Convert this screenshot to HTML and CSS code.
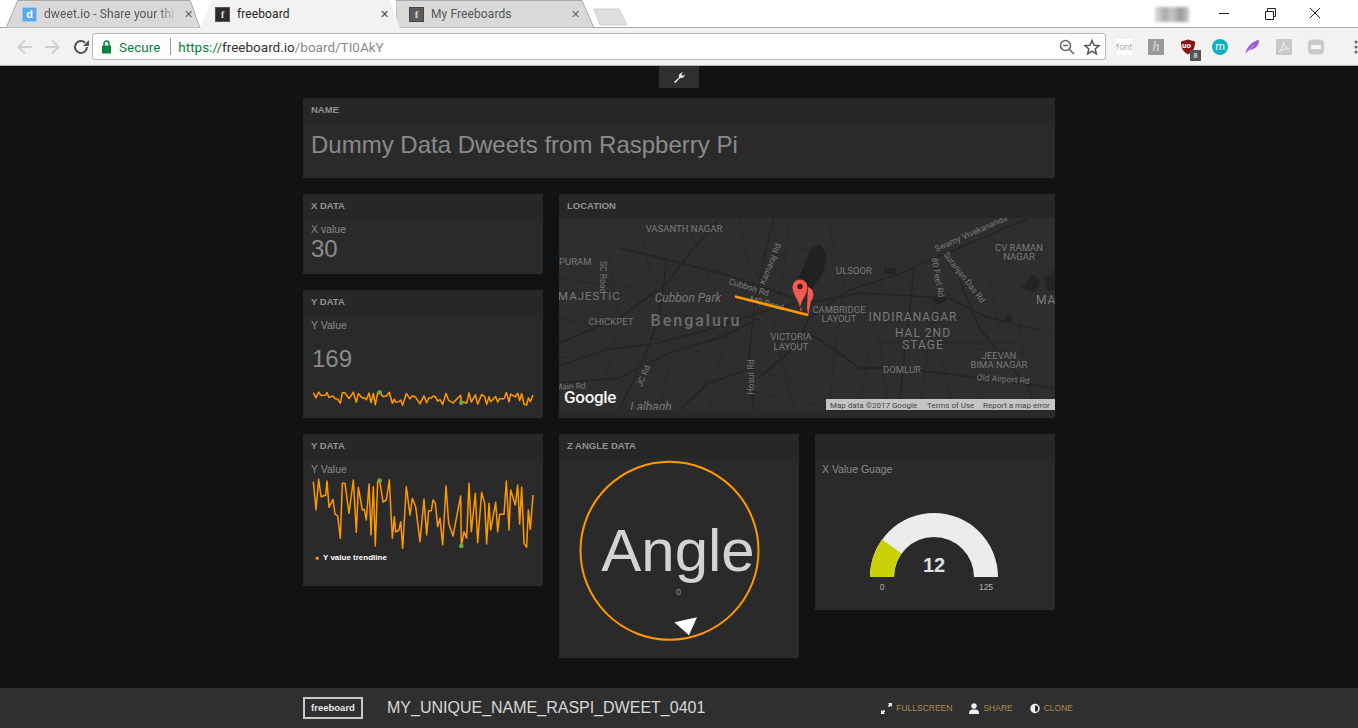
FILE: index.html
```html
<!DOCTYPE html>
<html lang="en">
<head>
<meta charset="utf-8">
<title>freeboard</title>
<link rel="stylesheet" href="styles.css">
</head>
<body>
<header class="browser">
  <div class="tabstrip">
    <div class="tab tab-one">
      <svg class="tab-shape" viewBox="0 0 198 28" preserveAspectRatio="none"><path d="M0 28 L12 0.5 H188 L198 28Z" class="tab-fill"/></svg>
      <span class="favicon fav-d">d</span><span class="tab-title fade">dweet.io - Share your thi</span><span class="tab-close">✕</span>
    </div>
    <div class="tab tab-two">
      <span class="favicon fav-f">f</span><span class="tab-title active">freeboard</span><span class="tab-close dark">✕</span>
    </div>
    <div class="tab tab-three">
      <svg class="tab-shape" viewBox="0 0 198 28" preserveAspectRatio="none"><path d="M0 28 L0 0.5 H186 L198 28Z" class="tab-fill"/></svg>
      <span class="favicon fav-g">f</span><span class="tab-title">My Freeboards</span><span class="tab-close">✕</span>
    </div>
    <svg class="newtab" width="36" height="20" viewBox="0 0 36 20"><path d="M1 2 H26 L34 18 H7Z" fill="#dedede" stroke="#cfcfcf"/></svg>
    <div class="spacer"></div>
    <div class="user-blur"></div>
    <svg class="winctl" width="140" height="28" viewBox="0 0 140 28">
      <path d="M1 13.5H11" stroke="#222" stroke-width="1"/>
      <path d="M47.5 11.5h8v8h-8zM49.5 11v-2.500h8v8h-2" fill="none" stroke="#222"/>
      <path d="M92 8l10 10M102 8l-10 10" stroke="#222" stroke-width="1"/>
    </svg>
  </div>
  <div class="toolbar">
    <svg class="nav" width="76" height="20" viewBox="0 0 76 20">
      <path d="M11 10H24M17 3.500L10.500 10l6.500 6.500" fill="none" stroke="#cfcfcf" stroke-width="2"/>
      <path d="M37 10H50M44 3.500L50.500 10 44 16.500" fill="none" stroke="#cfcfcf" stroke-width="2"/>
      <path d="M79 10a6 6 0 1 1-1.800-4.300" transform="translate(0 0)" fill="none" stroke="#555" stroke-width="2"/>
      <path d="M71 2v6h-6z" transform="translate(10 1)" fill="#555"/>
    </svg>
    <div class="omnibox">
      <svg class="lock" width="11" height="14" viewBox="0 0 11 14"><rect x="1" y="5.500" width="9" height="8" fill="#0b8043"/><path d="M3 6V3.500a2.500 2.500 0 0 1 5 0V6" fill="none" stroke="#0b8043" stroke-width="1.500"/></svg>
      <span class="secure">Secure</span>
      <span class="omni-sep"></span>
      <span class="url"><span class="https">https://</span><span class="host">freeboard.io</span><span class="path">/board/TI0AkY</span></span>
      <span class="spacer"></span>
      <svg width="18" height="18" viewBox="0 0 18 18" class="omni-icon"><circle cx="7.500" cy="7.500" r="5" fill="none" stroke="#666" stroke-width="1.600"/><path d="M5 7.500h5M11 11l5 5" stroke="#666" stroke-width="1.600"/></svg>
      <svg width="18" height="18" viewBox="0 0 18 18" class="omni-icon"><path d="M9 2.500l2 4.700 5 .4-3.800 3.300 1.200 5L9 13.200l-4.400 2.700 1.200-5L2 7.600l5-.4z" fill="none" stroke="#555" stroke-width="1.500"/></svg>
    </div>
    <div class="extensions">
      <span class="ext ext-font">font</span>
      <span class="ext ext-h">h</span>
      <span class="ext ext-ub">
        <svg width="16" height="16" viewBox="0 0 16 16"><path d="M1 2.500 8 .5l7 2c0 6-1.500 10-7 13-5.500-3-7-7-7-13z" fill="#8b1212"/></svg>
        <span class="ub-text">uo</span><span class="ext-badge">8</span>
      </span>
      <span class="ext ext-m">m</span>
      <svg class="ext" width="16" height="16" viewBox="0 0 16 16"><path d="M1 15C3 8 8 2 15 1c0 5-3 8-6 9-2 1-4 1-5 2z" fill="#9a5ccf"/><path d="M1 15 10 6" stroke="#d6b3ef" stroke-width=".8"/></svg>
      <svg class="ext" width="16" height="16" viewBox="0 0 16 16"><rect width="16" height="16" fill="#c9c9c9"/><path d="M3 12.500C6 10 8 6 7.500 3c0 3 2 6 5.500 6.500-3 0-6 1-10 3z" fill="none" stroke="#f3f3f3" stroke-width="1"/></svg>
      <svg class="ext" width="16" height="16" viewBox="0 0 16 16"><rect width="16" height="15" y=".5" rx="4" fill="#c9c9c9"/><rect x="3" y="6" width="10" height="4" fill="#f5f5f5"/></svg>
      <svg class="ext-menu" width="4" height="14" viewBox="0 0 4 14"><circle cx="2" cy="2" r="1.500" fill="#666"/><circle cx="2" cy="7" r="1.500" fill="#666"/><circle cx="2" cy="12" r="1.500" fill="#666"/></svg>
    </div>
  </div>
</header>

<main class="dashboard">
  <button class="tools" type="button" aria-label="Settings">
    <svg width="12" height="12" viewBox="0 0 12 12"><path d="M1 11 6 6.500C5.500 4 7 1.500 10 1.500L8.300 3.300 9 4.500l1.500.3L12 3c0 3-2.500 4.500-5 4L2.300 12z" fill="#f2f2f2"/></svg>
  </button>
  <div class="board">
    <section class="panel panel-name">
      <h2 class="panel-header">NAME</h2>
      <div class="panel-body name-text">Dummy Data Dweets from Raspberry Pi</div>
    </section>
    <div class="board-row">
      <div class="column">
        <section class="panel panel-x">
          <h2 class="panel-header">X DATA</h2>
          <div class="panel-body">
            <div class="w-label">X value</div>
            <div class="w-value">30</div>
          </div>
        </section>
        <section class="panel panel-y">
          <h2 class="panel-header">Y DATA</h2>
          <div class="panel-body">
            <div class="w-label">Y Value</div>
            <div class="w-value big-gap">169</div>
            <svg class="spark" width="230" height="26" viewBox="0 0 690 78">
              <g transform="translate(0 25) scale(1 .19)">
                <polyline class="line" points="13,35 21,120 29,28 36,80 50,76 54,33 60,112 72,88 78,132 86,138 94,205 100,40 108,40 120,130 133,30 142,187 148,52 160,120 166,118 172,150 180,42 186,195 193,50 199,228 206,35 212,32 222,96 232,90 241,30 245,110 250,205 256,140 260,186 270,180 275,155 281,235 292,50 303,135 310,85 320,110 333,215 345,88 353,195 359,122 367,122 372,90 379,100 386,170 393,145 401,225 411,48 419,160 432,198 455,78 457,190 465,185 473,205 480,40 487,185 499,70 506,218 518,67 527,100 533,222 540,100 545,180 560,97 566,185 572,133 585,133 592,33 600,180 605,60 619,105 626,45 632,162 638,52 645,220 653,232 658,120 664,178 672,75"/>
              </g>
              <circle cx="212" cy="31" r="7" fill="#6fa83f"/><circle cx="457" cy="62" r="7" fill="#6fa83f"/>
            </svg>
          </div>
        </section>
        <section class="panel panel-trend">
          <h2 class="panel-header">Y DATA</h2>
          <div class="panel-body">
            <div class="w-label">Y Value</div>
            <svg class="trend" width="230" height="96" viewBox="0 0 690 288">
              <polyline class="line" points="13,35 21,120 29,28 36,80 50,76 54,33 60,112 72,88 78,132 86,138 94,205 100,40 108,40 120,130 133,30 142,187 148,52 160,120 166,118 172,150 180,42 186,195 193,50 199,228 206,35 212,32 222,96 232,90 241,30 245,110 250,205 256,140 260,186 270,180 275,155 281,235 292,50 303,135 310,85 320,110 333,215 345,88 353,195 359,122 367,122 372,90 379,100 386,170 393,145 401,225 411,48 419,160 432,198 455,78 457,228 465,185 473,205 480,40 487,185 499,70 506,218 518,67 527,100 533,222 540,100 545,180 560,97 566,185 572,133 585,133 592,33 600,180 605,60 619,105 626,45 632,162 638,52 645,220 653,232 658,120 664,178 672,75"/>
              <circle cx="212" cy="32" r="7" fill="#6fa83f"/><circle cx="457" cy="228" r="7" fill="#6fa83f"/>
              <rect x="20" y="260" width="9" height="9" rx="3" fill="#ff9900"/>
              <text x="42" y="270" class="legend">Y value trendline</text>
            </svg>
          </div>
        </section>
      </div>
      <div class="column-wide">
        <section class="panel panel-map">
          <h2 class="panel-header">LOCATION</h2>
          <svg class="map" width="496" height="192" viewBox="0 0 496 192">
            <rect width="496" height="192" fill="#2e2e2e"/>
            <path d="M240 60 L252 30 L262 27 L268 38 L264 55 L252 72 L245 72Z" fill="#212121"/>
            <path d="M325 50h12v6h-12zM372 80l10-5 6 8-10 4zM462 70l12-14 8 8-6 10zM485 60l11-8v20l-8 0zM445 100l6-5 3 8-6 2z" fill="#242424"/>
            <g class="roads-thin">
              <path d="M0 30 40 60 90 75 130 100 170 120 230 140M20 0 50 40 60 100 40 192M80 0 90 50 120 90 110 150 100 192M125 0 150 60 170 100 150 192M0 60 60 70 130 60 200 40 250 30M0 100 70 115 130 130 190 150 260 170M0 140 60 135 130 160 200 175 270 190M180 0 190 50 225 80M230 0 225 50 215 110 235 192M270 0 275 40 300 20 330 0M265 100 290 120 310 130 300 192M285 60 280 100 275 140 270 192M300 70 320 120 330 192M320 40 325 80 375 100 385 150 395 192M375 40 378 80 370 130 360 192M430 60 440 110 425 160 420 192M460 100 465 140 475 192M300 100H430M310 125H460M300 175H400M400 130 470 135M430 20 480 40 496 60M470 100 496 120"/>
            </g>
            <g class="roads">
              <path d="M0 148 45 132 100 125 155 110 210 92 250 82M60 30 110 42 165 56 235 80M108 40 100 100 85 140 60 192M160 0 135 30 108 65 60 100 0 125M215 0 205 40 195 90 190 140 195 192M250 100 290 72 340 56 400 30 470 0M250 85 300 75 390 80 430 100 480 112M355 50 350 100 345 140 340 192M400 60 420 110 470 170 475 192M340 150 420 160 496 170M250 115 280 135 300 150 340 150M0 165 60 160 110 135 160 120 200 100M200 160 240 125 250 100M120 192 150 165 195 150"/>
            </g>
            <g class="ml">
              <text x="125" y="14" class="c">VASANTH NAGAR</text>
              <text x="0" y="47">PURAM</text>
              <text transform="translate(41 43) rotate(90)" class="s">SC Road</text>
              <text x="-1" y="82" class="m">MAJESTIC</text>
              <text x="52" y="107" class="c">CHICKPET</text>
              <text x="129" y="84" class="c it">Cubbon Park</text>
              <text x="137" y="108" class="c city">Bengaluru</text>
              <text transform="translate(189 72) rotate(17)" class="c s">Cubbon Rd</text>
              <text transform="translate(207 88) rotate(15)" class="c s">MG Road</text>
              <text transform="translate(214 47) rotate(-68)" class="c s">Kamaraj Rd</text>
              <text x="232" y="122" class="c">VICTORIA</text>
              <text x="232" y="132" class="c">LAYOUT</text>
              <text transform="translate(87 159) rotate(-68)" class="c s">JC Rd</text>
              <text transform="translate(195 159) rotate(-90)" class="c s">Hosur Rd</text>
              <text transform="translate(-4 172) rotate(-3)" class="s">Main Rd</text>
              <text x="92" y="193" class="c it">Lalbagh</text>
              <text x="295" y="56" class="c">ULSOOR</text>
              <text x="280" y="95" class="c">CAMBRIDGE</text>
              <text x="280" y="104" class="c">LAYOUT</text>
              <text x="354" y="103" class="c big">INDIRANAGAR</text>
              <text x="364" y="119" class="c big">HAL 2ND</text>
              <text x="364" y="131" class="c big">STAGE</text>
              <text transform="translate(413 18) rotate(-24)" class="c s">Swamy Vivekananda</text>
              <text transform="translate(376 60) rotate(80)" class="c s">80 Feet Rd</text>
              <text transform="translate(403 61) rotate(52)" class="c s">Suranjan Das Rd</text>
              <text x="460" y="33" class="c">CV RAMAN</text>
              <text x="460" y="42" class="c">NAGAR</text>
              <text x="477" y="86" class="big">MA</text>
              <text x="440" y="141" class="c">JEEVAN</text>
              <text x="440" y="150" class="c">BIMA NAGAR</text>
              <text x="343" y="155" class="c">DOMLUR</text>
              <text transform="translate(444 164) rotate(4)" class="c s">Old Airport Rd</text>
            </g>
            <path d="M176 78.500 249 97" stroke="#ff9900" stroke-width="2.500"/>
            <path d="M249 75a6.500 8 0 0 1 3 14l-3 16-1-10z" transform="translate(0 -6)" fill="#ee5c50"/>
            <path d="M241 89C239 81 233.500 76 233.500 69a7.500 7.500 0 0 1 15 0C248.500 76 243 81 241 89z" fill="#f05a4f"/>
            <circle cx="241" cy="68.500" r="2.700" fill="#4a1510"/>
            <rect x="241" y="90" width="2" height="3" fill="#d33"/>
            <text x="5" y="185" class="google">Google</text>
            <rect x="267" y="181" width="229" height="11" fill="#c4c4c4"/>
            <g class="attr">
              <text x="271" y="189.500">Map data ©2017 Google</text>
              <text x="368" y="189.500">Terms of Use</text>
              <text x="424" y="189.500">Report a map error</text>
            </g>
          </svg>
        </section>
        <div class="sub-row">
          <section class="panel panel-angle">
            <h2 class="panel-header">Z ANGLE DATA</h2>
            <svg class="dial" width="240" height="200" viewBox="562 458 240 200">
              <circle cx="672.500" cy="550.700" r="89" fill="none" stroke="#ff9900" stroke-width="2"/>
              <text x="681" y="571" class="angle">Angle</text>
              <text x="681.500" y="595" class="angle-sub">0</text>
              <path d="M677.300 622.300 700 617.300 692 635.300Z" fill="#fff"/>
            </svg>
          </section>
          <section class="panel panel-gauge">
            <div class="panel-header"></div>
            <div class="panel-body">
              <div class="w-label">X Value Guage</div>
              <svg class="gauge" width="240" height="130" viewBox="818 476 240 130">
                <path d="M873 577A64 64 0 0 1 1001 577H977A40 40 0 0 0 897 577Z" fill="#edebeb"/>
                <path d="M873 577A64 64 0 0 1 885 539.600L904.500 553.600A40 40 0 0 0 897 577Z" fill="#c9d208"/>
                <text x="937" y="572" class="g-value">12</text>
                <text x="885" y="590" class="g-min">0</text>
                <text x="989" y="590" class="g-min">125</text>
              </svg>
            </div>
          </section>
        </div>
      </div>
    </div>
  </div>
</main>

<footer class="footer">
  <div class="logo">freeboard</div>
  <div class="board-title">MY_UNIQUE_NAME_RASPI_DWEET_0401</div>
  <div class="spacer"></div>
  <a class="action act-full"><svg width="11" height="11" viewBox="0 0 11 11"><path d="M1 10 3.500 7.500M7.500 3.500 10 1" stroke="#eee" stroke-width="2"/><path d="M0 11V7l4 4zM11 0v4L7 0z" fill="#eee"/></svg>FULLSCREEN</a>
  <a class="action act-share"><svg width="10" height="11" viewBox="0 0 10 11"><circle cx="5" cy="3" r="2.700" fill="#eee"/><path d="M0 11c0-3 1-4 3-4.500h4c2 .5 3 1.500 3 4.500z" fill="#eee"/></svg>SHARE</a>
  <a class="action act-clone"><svg width="10" height="11" viewBox="0 0 10 11"><circle cx="5" cy="5.500" r="4" fill="none" stroke="#eee" stroke-width="1.500"/><path d="M5 1.500a4 4 0 0 0 0 8z" fill="#eee"/></svg>CLONE</a>
</footer>
</body>
</html>
```
FILE: styles.css
```css
* { box-sizing: border-box; }
html, body { margin: 0; height: 100%; }
body {
  width: 1358px; height: 728px; overflow: hidden;
  display: flex; flex-direction: column;
  background: #101214;
  font-family: "Liberation Sans", Arial, sans-serif;
}
svg { display: block; flex: none; }
.spacer { flex: 1; }

/* browser chrome */
.browser { height: 66px; flex: none; background: #f2f2f2; font-family: Roboto, "Open Sans", sans-serif; }
.tabstrip { height: 28px; display: flex; padding-left: 6px; background: #fff; border-bottom: 1px solid #a9a9a9; }
.tab { position: relative; height: 28px; display: flex; align-items: center; font-size: 12px; color: #555; flex: none; }
.tab-shape { position: absolute; inset: 0; width: 100%; height: 100%; }
.tab-fill { fill: #d9d9d9; stroke: #a9a9a9; stroke-width: 1; vector-effect: non-scaling-stroke; }
.tab > span { position: relative; }
.tab-one { width: 194px; padding-left: 16px; }
.tab-two { width: 200px; margin-left: 0; padding-left: 15px; background: #f2f2f2; clip-path: polygon(0 100%, 6% 0, 95% 0, 100% 100%); z-index: 2; height: 28px; }
.tab-three { width: 198px; margin-left: -4px; padding-left: 13px; }
.favicon { width: 15px; height: 15px; flex: none; text-align: center; font: bold 11px/13px "Liberation Serif", serif; }
.fav-d { background: #5aa9e6; color: #fff; border: 1px solid #9ccbef; font-family: "Liberation Sans", sans-serif; }
.fav-f { background: #2a2a2a; color: #ddd; border: 1px solid #555; }
.fav-g { background: #5c5c5c; color: #ddd; border: 1px solid #444; }
.tab-title { margin-left: 7px; width: 134px; white-space: nowrap; overflow: hidden; letter-spacing: .1px; }
.tab-title.active { color: #222; }
.tab-title.fade { -webkit-mask-image: linear-gradient(90deg, #000 85%, transparent); mask-image: linear-gradient(90deg, #000 85%, transparent); }
.tab-close { margin-left: 6px; font-size: 11px; font-weight: bold; color: #666; width: 12px; font-family: "DejaVu Sans", sans-serif; }
.tab-close.dark { color: #444; margin-left: 9px; }
.newtab { margin: 7px 0 0 -1px; }
.user-blur { width: 34px; height: 15px; margin: 7px 29px 0 0; background: linear-gradient(90deg, #ddd, #aaa 30%, #c8c8c8 50%, #999 75%, #ccc); filter: blur(1.500px); }
.winctl { margin-right: 0; }

.toolbar { height: 38px; display: flex; align-items: center; border-bottom: 1px solid #b5b5b5; }
.nav { margin-left: 0; width: 92px; }
.omnibox { width: 1014px; height: 27px; background: #fff; border: 1px solid #b8b8b8; border-radius: 3px; display: flex; align-items: center; padding: 0 4px 0 8px; font-size: 13.500px; }
.secure { margin-left: 7px; color: #0b8043; }
.omni-sep { width: 1px; height: 17px; background: #999; margin: 0 7px 0 10px; }
.https { color: #0b8043; }
.host { color: #333; }
.path { color: #888; }
.omni-icon { margin-left: 7px; }
.extensions { flex: 1; display: flex; align-items: center; padding-left: 10px; gap: 16px; }
.ext { width: 16px; height: 16px; flex: none; position: relative; text-align: center; display: block; }
.ext-font { font-size: 9px; line-height: 16px; background: #fff; color: #aaa; }
.ext-h { font: italic 14px/16px "Liberation Serif", serif; background: #999; color: #ddd; }
.ext-ub .ub-text { position: absolute; left: 2px; top: 0; font-size: 8px; font-weight: bold; color: #fff; line-height: 14px; }
.ext-badge { position: absolute; left: 10px; top: 11px; width: 11px; height: 11px; background: #555; color: #fff; font-size: 8px; line-height: 11px; }
.ext-m { border-radius: 50%; background: #12b0bc; color: #fff; font-size: 11px; line-height: 15px; }
.ext-menu { margin-left: 14px; }

/* dashboard */
.dashboard { flex: 1; min-height: 0; display: flex; flex-direction: column; align-items: center; background: #101214; }
.tools { width: 40px; height: 22px; flex: none; padding: 0; border: 0; background: #2f2f2f; display: flex; align-items: center; justify-content: center; }
.board { width: 752px; margin-top: 10px; display: flex; flex-direction: column; gap: 16px; }
.board-row { display: flex; gap: 16px; align-items: flex-start; }
.column { width: 240px; display: flex; flex-direction: column; gap: 16px; }
.column-wide { width: 496px; display: flex; flex-direction: column; gap: 16px; }
.sub-row { display: flex; gap: 16px; align-items: flex-start; }
.panel { background: #2a2a2a; width: 240px; overflow: hidden; }
.panel-header { height: 24px; margin: 0; padding: 0 8px; background: #272727; font-size: 9.500px; line-height: 23px; font-weight: bold; color: #929292; }
.panel-body { padding: 4px 8px 0; }
.panel-name { width: 752px; height: 80px; }
.name-text { font-size: 24px; line-height: 28px; color: #8a8a8a; padding-top: 9px; }
.panel-x { height: 80px; }
.panel-y { height: 128px; }
.panel-trend { height: 152px; }
.panel-map { width: 496px; height: 224px; }
.panel-angle { height: 224px; }
.panel-gauge { height: 176px; }
.panel-gauge .panel-body { padding: 4px 0 0; }
.panel-gauge .w-label { padding-left: 7px; }
.w-label { font-size: 10.500px; line-height: 14px; color: #8a8a8a; }
.w-value { font-size: 24px; line-height: 26px; color: #8a8a8a; }
.big-gap { margin: 14px 0 0 1px; }
.spark { margin: 10px 0 0 -2px; }
.trend { margin: -6px 0 0 -2px; }
.gauge { margin-top: 0; }
.line { fill: none; stroke: #ff9900; stroke-width: 4.500px; stroke-linejoin: round; vector-effect: non-scaling-stroke; }
.spark .line { stroke-width: 1.500px; }
.trend .line { stroke-width: 1.500px; }
.legend { font: bold 24px "Liberation Sans", sans-serif; fill: #fff; }

/* map */
.roads-thin path { fill: none; stroke: #292929; stroke-width: 1; }
.roads path { fill: none; stroke: #252525; stroke-width: 1.600; }
.ml text { font: 9.500px Roboto, sans-serif; fill: #7a7a7a; }
.ml .c { text-anchor: middle; }
.ml .s { font-size: 8.500px; }
.ml .m { font-size: 11.500px; letter-spacing: 1px; }
.ml .it { font-style: italic; font-size: 12px; }
.ml .city { font-size: 16px; font-weight: 500; letter-spacing: 2px; fill: #6e6e6e; }
.ml .big { font-size: 12px; letter-spacing: 1px; }
.google { font: 500 17px Roboto, sans-serif; fill: #f4f4f4; letter-spacing: -.3px; }
.attr text { font: 8px Roboto, sans-serif; fill: #444; }

/* dial and gauge */
.angle { font: 60px "Liberation Sans", sans-serif; fill: #d3d3d3; text-anchor: middle; }
.angle-sub { font: 9px "Liberation Sans", sans-serif; fill: #999; text-anchor: middle; }
.g-value { font: bold 20px "Liberation Sans", sans-serif; fill: #e0e0e0; text-anchor: middle; }
.g-min { font: 8.500px "Liberation Sans", sans-serif; fill: #b0b0b0; text-anchor: middle; }

/* footer */
.footer { height: 40px; flex: none; display: flex; align-items: center; background: #2f2f2f; padding: 0 285px 0 303px; }
.logo { width: 60px; height: 22px; border: 2px solid #c8c8c8; color: #e8e8e8; font-size: 9.500px; font-weight: bold; line-height: 18px; text-align: center; }
.board-title { margin-left: 24px; font-size: 16px; color: #d8d8d8; }
.action { display: flex; align-items: center; gap: 4px; font-size: 8.500px; color: #b08a4a; margin-left: 17px; }
```
